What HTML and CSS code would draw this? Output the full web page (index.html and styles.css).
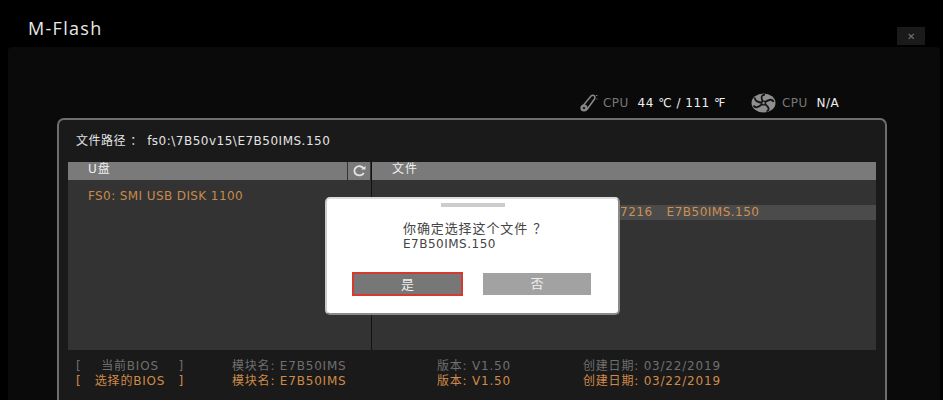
FILE: index.html
```html
<!DOCTYPE html>
<html lang="zh-CN">
<head>
  <meta charset="UTF-8" />
  <title>M-Flash</title>
  <link rel="stylesheet" href="styles.css">
</head>
<body>
  <header class="topbar">
    <div class="app-title">M-Flash</div>
    <button class="close-btn">&#10005;</button>
  </header>

  <div class="screen">
    <div class="sensors">
      <svg class="thermo" width="20" height="20" viewBox="0 0 20 20">
        <path d="M3 14 L12 3 Q14 1.500 15.500 3 Q16.500 4.500 15.500 6 L8 16.500" fill="none" stroke="#8a8a8a" stroke-width="1.500"/>
        <circle cx="5" cy="15" r="3.600" fill="#8a8a8a"/>
        <circle cx="5" cy="15" r="1.300" fill="#222"/>
        <path d="M17 2.500h1.500M17.500 6h1" stroke="#777" stroke-width="1"/>
      </svg>
      <span class="sensor-label">CPU</span>
      <span class="sensor-value">44 ℃ / 111 ℉</span>
      <svg class="fan" width="25" height="20" viewBox="0 0 25 20">
        <ellipse cx="12.500" cy="10" rx="12" ry="9.500" fill="#8f8f8f"/>
        <path d="M12.500 10 Q8 2 14 1.500 M12.500 10 Q21 4 22.500 9 M12.500 10 Q21 16 15.500 18.500 M12.500 10 Q5 17 2.500 12.500 M12.500 10 Q3 9 4 4.500" fill="none" stroke="#161616" stroke-width="1.800"/>
        <circle cx="12.500" cy="10" r="2.600" fill="#161616"/>
        <circle cx="12.500" cy="10" r="1.200" fill="#8f8f8f"/>
      </svg>
      <span class="sensor-label">CPU</span>
      <span class="sensor-value">N/A</span>
    </div>

    <main class="panel">
      <div class="path-line">文件路径 ： fs0:\7B50v15\E7B50IMS.150</div>

      <div class="browser">
        <div class="col-drives">
          <div class="col-head">
            <span class="head-text">U盘</span>
            <span class="refresh">
              <svg width="14" height="12" viewBox="0 0 14 12">
                <path d="M11.500 3.200 A5 4.600 0 1 0 11.800 8" fill="none" stroke="#e4e4e4" stroke-width="1.800"/>
                <path d="M9 4.600h4.500V1z" fill="#e4e4e4"/>
              </svg>
            </span>
          </div>
          <div class="drive-item">FS0: SMI USB DISK 1100</div>
        </div>
        <div class="col-files">
          <div class="col-head">
            <span class="head-text">文件</span>
          </div>
          <div class="file-row">7216<span class="file-name">E7B50IMS.150</span></div>
        </div>
      </div>

      <div class="bios-info">
        <div class="bios-row">
          <span class="bios-tag"><i>[</i><span>当前BIOS</span><i>]</i></span>
          <span class="bios-module">模块名: E7B50IMS</span>
          <span class="bios-version">版本: V1.50</span>
          <span>创建日期: 03/22/2019</span>
        </div>
        <div class="bios-row selected">
          <span class="bios-tag"><i>[</i><span>选择的BIOS</span><i>]</i></span>
          <span class="bios-module">模块名: E7B50IMS</span>
          <span class="bios-version">版本: V1.50</span>
          <span>创建日期: 03/22/2019</span>
        </div>
      </div>
    </main>
  </div>

  <div class="dialog">
    <div class="grip"></div>
    <div class="dialog-text">
      <div class="dialog-question">你确定选择这个文件 ？</div>
      <div>E7B50IMS.150</div>
    </div>
    <div class="dialog-btns">
      <button class="btn btn-yes">是</button>
      <button class="btn btn-no">否</button>
    </div>
  </div>
</body>
</html>
```

FILE: styles.css
```css
html, body {
  margin: 0;
  padding: 0;
  height: 400px;
  overflow: hidden;
  background-color: #000;
  font-family: "DejaVu Sans", "Noto Sans CJK SC", sans-serif;
}
.topbar {
  display: flex;
  justify-content: space-between;
  height: 47px;
  padding: 0 18px 0 28px;
}
.app-title {
  margin-top: 17px;
  font-family: "Open Sans", "Noto Sans", sans-serif;
  font-size: 18px;
  line-height: 22px;
  letter-spacing: 1.3px;
  color: #e8e8e8;
}
.close-btn {
  width: 28px;
  height: 18px;
  margin-top: 27px;
  padding: 0;
  border: none;
  background: #1a1a1a;
  color: #777;
  font-size: 10px;
}
.screen {
  box-sizing: border-box;
  margin: 0 3px 0 8px;
  height: 353px;
  background: #0a0a0a;
  border-radius: 4px 4px 0 0;
  padding-top: 46px;
}
.sensors {
  display: flex;
  align-items: center;
  height: 20px;
  padding-left: 571px;
  font-size: 12px;
}
.thermo {
  margin-right: 4px;
}
.fan {
  margin: 0 6px 0 25px;
}
.sensor-label {
  color: #777;
  letter-spacing: 0.4px;
  margin-right: 9px;
}
.sensor-value {
  color: #eee;
  letter-spacing: 0.5px;
}
.panel {
  box-sizing: border-box;
  margin: 5px 0 0 49px;
  width: 830px;
  height: 282px;
  background: #1a1a1a;
  border: 2px solid #6e6e6e;
  border-bottom: none;
  border-radius: 7px 7px 0 0;
}
.path-line {
  padding: 13px 0 0 17px;
  height: 29px;
  font-size: 12px;
  line-height: 16px;
  letter-spacing: 0.5px;
  color: #e4e4e4;
}
.browser {
  display: flex;
  margin: 0 9px;
  height: 188px;
  background: #333;
}
.col-drives {
  width: 303px;
  border-right: 1px solid #111;
}
.col-files {
  flex: 1;
}
.col-head {
  display: flex;
  height: 18px;
  background: #7a7a7a;
  font-size: 12px;
  line-height: 15px;
  letter-spacing: 1px;
  color: #eee;
}
.head-text {
  flex: 1;
  padding-left: 20px;
}
.refresh {
  display: flex;
  align-items: center;
  justify-content: center;
  width: 24px;
  border-left: 1px solid #333;
  border-right: 1px solid #333;
  box-sizing: border-box;
}
.drive-item {
  padding: 9px 0 0 20px;
  font-size: 12px;
  letter-spacing: 0.4px;
  color: #c98a4c;
}
.file-row {
  margin-top: 25px;
  height: 15px;
  padding-left: 248px;
  background: #4b4b4b;
  font-size: 12px;
  line-height: 15px;
  letter-spacing: 0.5px;
  color: #d09050;
}
.file-name {
  margin-left: 14px;
}
.bios-info {
  padding: 9px 0 0 17px;
  font-size: 12px;
  line-height: 15px;
  letter-spacing: 0.8px;
  color: #6f6f6f;
}
.bios-row {
  display: flex;
}
.bios-row.selected {
  color: #d08a48;
}
.bios-tag {
  display: flex;
  justify-content: space-between;
  width: 108px;
  margin-right: 48px;
}
.bios-tag i {
  font-style: normal;
}
.bios-module {
  width: 205px;
}
.bios-version {
  width: 146px;
}
.dialog {
  position: absolute;
  left: 325px;
  top: 197px;
  width: 295px;
  height: 118px;
  box-sizing: border-box;
  background: #fff;
  border: 2px solid #8a8a8a;
  border-top-color: #ddd;
  border-left-color: #ccc;
  border-radius: 5px;
}
.grip {
  width: 64px;
  height: 4px;
  margin: 4px auto 0;
  background: #ccc;
}
.dialog-text {
  padding: 14px 0 0 76px;
  font-size: 12px;
  line-height: 15px;
  letter-spacing: 0.5px;
  color: #444;
}
.dialog-question {
  font-size: 13px;
  line-height: 16px;
  letter-spacing: 0.9px;
}
.dialog-btns {
  display: flex;
  align-items: center;
  gap: 20px;
  padding: 20px 0 0 25px;
}
.btn {
  padding: 0 0 3px;
  border: none;
  font-family: inherit;
  font-size: 13px;
  color: #eee;
}
.btn-yes {
  width: 111px;
  height: 24px;
  background: #777;
  border: 2px solid #d8392f;
}
.btn-no {
  width: 108px;
  height: 22px;
  background: #a2a2a2;
}
```
